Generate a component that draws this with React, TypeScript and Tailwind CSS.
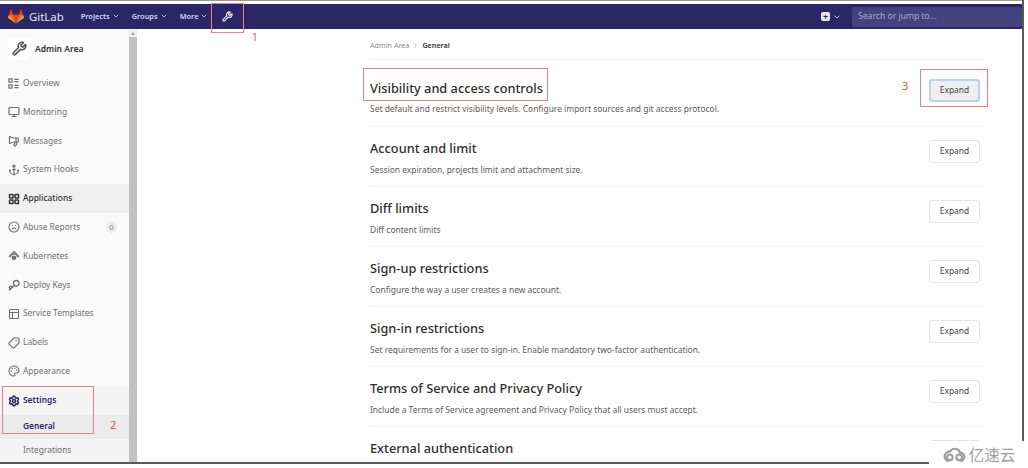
import {
  Anchor,
  ChevronDown,
  ChevronRight,
  Frown,
  Key,
  LayoutGrid,
  Megaphone,
  Monitor,
  Palette,
  PanelsTopLeft,
  Settings,
  Tag,
  Wrench,
} from "lucide-react";
import type { ReactNode } from "react";

const font = "font-['Noto_Sans','Open_Sans',sans-serif]";

function FoxLogo() {
  return (
    <svg viewBox="0 0 24 22" className="h-[15px] w-[16px]" aria-hidden>
      <path d="M12 21.5 16.4 8H7.6z" fill="#e24329" />
      <path d="M12 21.5 7.6 8H1.4z" fill="#fc6d26" />
      <path d="M1.4 8 .1 12.1c-.1.4 0 .8.3 1L12 21.5z" fill="#fca326" />
      <path d="M1.4 8h6.2L4.9.6c-.1-.4-.7-.4-.8 0z" fill="#e24329" />
      <path d="M12 21.5 16.4 8h6.2z" fill="#fc6d26" />
      <path d="M22.6 8l1.3 4.1c.1.4 0 .8-.3 1L12 21.5z" fill="#fca326" />
      <path d="M22.6 8h-6.2l2.7-7.4c.1-.4.7-.4.8 0z" fill="#e24329" />
    </svg>
  );
}

function OverviewIcon() {
  return (
    <svg viewBox="0 0 12 12" className="h-[11px] w-[11px]" fill="none" stroke="currentColor" strokeWidth="1.3" aria-hidden>
      <rect x="1" y="1" width="3.5" height="3.5" />
      <rect x="1" y="7.5" width="3.5" height="3.5" />
      <path d="M7 1.5h4.5M7 4h4.5M7 8h4.5M7 10.500h4.5" />
    </svg>
  );
}

function KubernetesIcon() {
  return (
    <svg viewBox="0 0 14 14" className="h-[12px] w-[12px]" fill="none" stroke="currentColor" strokeWidth="1.4" aria-hidden>
      <path d="M1 8 7 2l6 6" />
      <path d="M3 8.5a4 4 0 0 1 8 0" />
      <circle cx="7" cy="9" r="2" fill="currentColor" />
    </svg>
  );
}

type NavItem = { label: string; icon: ReactNode; active?: boolean; badge?: string };

const iconClass = "h-[12px] w-[12px]";

const navItems: NavItem[] = [
  { label: "Overview", icon: <OverviewIcon /> },
  { label: "Monitoring", icon: <Monitor className={iconClass} strokeWidth={2.4} /> },
  { label: "Messages", icon: <Megaphone className={`${iconClass} -scale-x-100`} strokeWidth={2.4} /> },
  { label: "System Hooks", icon: <Anchor className={iconClass} strokeWidth={2.4} /> },
  { label: "Applications", icon: <LayoutGrid className={iconClass} strokeWidth={3} />, active: true },
  { label: "Abuse Reports", icon: <Frown className={iconClass} strokeWidth={2.2} />, badge: "0" },
  { label: "Kubernetes", icon: <KubernetesIcon /> },
  { label: "Deploy Keys", icon: <Key className={`${iconClass} rotate-180`} strokeWidth={2.6} /> },
  { label: "Service Templates", icon: <PanelsTopLeft className={iconClass} strokeWidth={2.2} /> },
  { label: "Labels", icon: <Tag className={`${iconClass} rotate-90`} strokeWidth={2.4} /> },
  { label: "Appearance", icon: <Palette className={iconClass} strokeWidth={2.2} /> },
];

const sections = [
  { title: "Visibility and access controls", text: "Set default and restrict visibility levels. Configure import sources and git access protocol.", focus: true, pad: "h-[67px] pt-[18px]", textGap: "mt-[5px]", btnGap: "mt-[1px]" },
  { title: "Account and limit", text: "Session expiration, projects limit and attachment size.", pad: "h-[60px] pt-[11px]", textGap: "mt-[6px]", btnGap: "mt-[2px]" },
  { title: "Diff limits", text: "Diff content limits", pad: "h-[60px] pt-[11px]", textGap: "mt-[6px]", btnGap: "mt-[2px]" },
  { title: "Sign-up restrictions", text: "Configure the way a user creates a new account.", pad: "h-[60px] pt-[11px]", textGap: "mt-[6px]", btnGap: "mt-[2px]" },
  { title: "Sign-in restrictions", text: "Set requirements for a user to sign-in. Enable mandatory two-factor authentication.", pad: "h-[60px] pt-[11px]", textGap: "mt-[6px]", btnGap: "mt-[2px]" },
  { title: "Terms of Service and Privacy Policy", text: "Include a Terms of Service agreement and Privacy Policy that all users must accept.", pad: "h-[60px] pt-[11px]", textGap: "mt-[6px]", btnGap: "mt-[2px]" },
  { title: "External authentication", text: "", pad: "h-[60px] pt-[11px]", textGap: "mt-[6px]", btnGap: "mt-[2px]" },
];

function TopLink({ label }: { label: string }) {
  return (
    <span className="flex items-center gap-[2px] text-[7.4px] font-semibold text-[#d6d4ea]">
      {label}
      <ChevronDown className="h-[8px] w-[8px]" strokeWidth={2.5} />
    </span>
  );
}

export default function App() {
  return (
    <div className={`${font} relative h-[468px] w-[1028px] overflow-hidden bg-white`}>
      <div className="h-[464px] w-[1024px] overflow-hidden border-r-2 border-b-2 border-[#5a5a5a]">
        <div className="h-[4px] border-t border-[#9a9a9a] bg-white" />
        <header className="flex h-[25px] items-center bg-[#2b2766] pl-[8px]">
          <FoxLogo />
          <span className="ml-[5px] text-[11.4px] text-[#e6e5f2]">GitLab</span>
          <div className="ml-[17px] flex items-center gap-[12px]">
            <TopLink label="Projects" />
            <TopLink label="Groups" />
            <TopLink label="More" />
          </div>
          <Wrench className="ml-[14px] h-[11px] w-[11px] text-[#e6e5f2]" strokeWidth={2.6} />
          <div className="ml-auto flex items-center gap-[3px] text-[#d6d4ea]">
            <span className="flex h-[9px] w-[9px] items-center justify-center rounded-[2px] bg-[#e6e5f2] text-[9px] leading-none font-bold text-[#2b2766]">+</span>
            <ChevronDown className="h-[8px] w-[8px]" strokeWidth={2.5} />
          </div>
          <div className="ml-[11px] flex h-[20px] w-[170px] items-center rounded-[3px] bg-[#45417f] px-[6px] text-[8.6px] text-[#aaa8cc]">
            Search or jump to...
          </div>
        </header>

        <div className="flex h-[435px]">
          <aside className="flex w-[137px] shrink-0">
            <nav className="w-[129px] shrink-0 bg-[#fafafa]">
              <div className="flex h-[39px] items-center pl-[8px]">
                <span className="flex h-[22px] w-[22px] items-center justify-center rounded-[4px] bg-white">
                  <Wrench className="h-[15px] w-[15px] text-[#555]" strokeWidth={2.6} />
                </span>
                <span className="mt-[1px] ml-[5px] text-[8.5px] font-semibold text-[#333]">Admin Area</span>
              </div>
              <div className="mt-[1px]">
                {navItems.map((item) => (
                  <div
                    key={item.label}
                    className={`flex h-[28.8px] items-center pr-[12px] pl-[8px] text-[8.4px] ${
                      item.active ? "bg-[#f0f0f0] font-medium text-[#333]" : "text-[#707070]"
                    }`}
                  >
                    <span className="flex w-[15px] shrink-0 items-center">{item.icon}</span>
                    {item.label}
                    {item.badge ? (
                      <span className="ml-auto flex h-[12px] w-[11px] items-center justify-center rounded-full bg-[#ececec] text-[7.500px] text-[#777]">
                        {item.badge}
                      </span>
                    ) : null}
                  </div>
                ))}
              </div>
              <div className="bg-[#f4f4f4] pt-[1px]">
                <div className="flex h-[28px] items-center pl-[8px] text-[8.4px] font-semibold text-[#2b2766]">
                  <span className="flex w-[15px] shrink-0 items-center">
                    <Settings className={iconClass} strokeWidth={3} />
                  </span>
                  Settings
                </div>
                <div className="flex h-[24px] items-center bg-[#ebebeb] pl-[23px] text-[8.4px] font-semibold text-[#2b2766]">
                  General
                </div>
                <div className="flex h-[24px] items-center pl-[23px] text-[8.4px] text-[#707070]">Integrations</div>
              </div>
            </nav>
            <div className="w-[8px] bg-[#f1f1f1]">
              <div className="flex h-[8px] items-center justify-center">
                <span className="h-0 w-0 border-x-[2.5px] border-b-[3px] border-x-transparent border-b-[#a3a3a3]" />
              </div>
              <div className="h-full bg-[#c1c1c1]" />
            </div>
          </aside>

          <main className="ml-[233px] w-[614px] shrink-0">
            <div className="flex h-[31px] items-center border-b border-[#efefef] pt-[2px] text-[7.2px]">
              <span className="text-[#8a8a8a]">Admin Area</span>
              <ChevronRight className="mx-[3px] h-[7px] w-[7px] text-[#8a8a8a]" />
              <span className="font-semibold text-[#333]">General</span>
            </div>
            {sections.map((s) => (
              <section key={s.title} className={`flex items-start justify-between border-b border-[#efefef] ${s.pad}`}>
                <div>
                  <h2 className="text-[12.75px] leading-[20px] font-medium text-[#2e2e2e]">{s.title}</h2>
                  <p className={`text-[8.45px] leading-[12px] text-[#5c5c5c] ${s.textGap}`}>{s.text}</p>
                </div>
                <button
                  className={`mr-[4px] h-[23px] w-[51px] rounded-[3px] text-[8.4px] text-[#444] ${s.btnGap} ${
                    s.focus ? "border-2 border-[#b5d5ee] bg-[#efefef]" : "border border-[#e5e5e5] bg-white"
                  }`}
                >
                  Expand
                </button>
              </section>
            ))}
          </main>
        </div>
      </div>

      {/* red annotation boxes drawn over the screenshot */}
      <div className="absolute top-[3px] left-[211px] h-[30px] w-[33px] border border-[#e8808a]" />
      <span className="absolute top-[30px] left-[252px] text-[10px] text-[#d9534f]">1</span>
      <div className="absolute top-[386px] left-[2px] h-[48px] w-[92px] border border-[#e8808a]" />
      <span className="absolute top-[417px] left-[110px] text-[11px] text-[#d9534f]">2</span>
      <div className="absolute top-[68px] left-[363px] h-[33px] w-[185px] border border-[#e8808a]" />
      <div className="absolute top-[69px] left-[920px] h-[38px] w-[68px] border border-[#e8808a]" />
      <span className="absolute top-[78px] left-[902px] text-[11px] text-[#d9534f]">3</span>

      {/* watermark */}
      <div className="absolute right-0 bottom-0 flex h-[27px] w-[99px] items-center justify-center gap-[2px] bg-white text-[15.5px] text-[#9e9e9e]">
        <svg viewBox="0 0 26 18" className="h-[17px] w-[25px]" fill="none" stroke="#9e9e9e" strokeWidth="2.2" aria-hidden>
          <path d="M7 16a5 5 0 1 1 1-10 6 6 0 0 1 11 1 4.500 4.500 0 0 1 0 9" />
          <circle cx="8" cy="12" r="3" />
          <circle cx="18" cy="12" r="3" />
        </svg>
        <span className="font-['Noto_Sans_CJK_SC',sans-serif]">亿速云</span>
      </div>
    </div>
  );
}
